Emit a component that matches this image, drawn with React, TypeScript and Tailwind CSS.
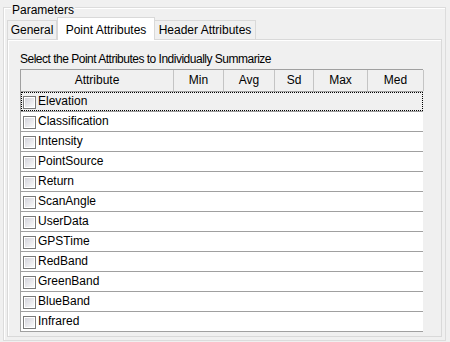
import React from 'react';

const attributes = [
  'Elevation',
  'Classification',
  'Intensity',
  'PointSource',
  'Return',
  'ScanAngle',
  'UserData',
  'GPSTime',
  'RedBand',
  'GreenBand',
  'BlueBand',
  'Infrared',
];

const columns = ['Attribute', 'Min', 'Avg', 'Sd', 'Max', 'Med'];

const CheckBox = () => (
  <span className="mt-[3px] inline-block h-[13px] w-[13px] shrink-0 border border-[#7a7a7a] bg-white p-px">
    <span className="block h-full w-full bg-gradient-to-br from-[#d4d4dc] to-[#fafafa]" />
  </span>
);

export default function App() {
  return (
    <div className="h-[342px] w-[450px] bg-[#f0f0f0] pl-[3px] pt-[7px] font-['Liberation_Sans',sans-serif] text-[12px] leading-[15px] text-black">
      {/* Parameters group box */}
      <div className="relative h-[334px] w-[443px] border border-[#dcdcdc] px-[3px] pt-[9px] shadow-[inset_1px_1px_0_#fff]">
        <span className="absolute left-[7px] top-[-5px] bg-[#f0f0f0] px-px">Parameters</span>

        {/* Tabs */}
        <div className="flex h-[22px] items-end">
          <div className="flex h-[19px] w-[50px] items-center justify-center border border-b-0 border-[#d9d9d9] bg-[#f0f0f0] pt-px">
            General
          </div>
          <div className="relative z-10 -mb-px flex h-[23px] w-[98px] items-start justify-center border border-b-0 border-[#d9d9d9] bg-white pt-[5px]">
            Point Attributes
          </div>
          <div className="flex h-[19px] w-[101px] items-center justify-center border border-b-0 border-l-0 border-[#d9d9d9] bg-[#f0f0f0] pt-px">
            Header Attributes
          </div>
        </div>

        {/* Tab page */}
        <div className="h-[298px] w-[435px] border border-[#d9d9d9] pl-[12px] pt-[12px] shadow-[inset_1px_1px_0_#fff]">
          <div className="h-[17px] tracking-[-0.5px]">Select the Point Attributes to Individually Summarize</div>

          <div className="w-[403px] border-l border-[#a0a0a0]">
            <div className="grid h-[23px] grid-cols-[153px_50px_51px_39px_54px_56px] border-y border-[#a0a0a0] bg-[#f0f0f0]">
              {columns.map((c) => (
                <div key={c} className="flex items-center justify-center border-r border-[#c4c4c4]">
                  {c}
                </div>
              ))}
            </div>
            {attributes.map((a, i) => (
              <div key={a} className="h-[20px] border-b border-[#a0a0a0] bg-white">
                <div
                  className={`flex h-[19px] items-start gap-[2px] border pl-[1px] ${
                    i === 0 ? 'border-dotted border-black bg-[#f0f0f0]' : 'border-transparent'
                  }`}
                >
                  <CheckBox />
                  <span className="pt-[1px]">{a}</span>
                </div>
              </div>
            ))}
          </div>
        </div>
      </div>
    </div>
  );
}
